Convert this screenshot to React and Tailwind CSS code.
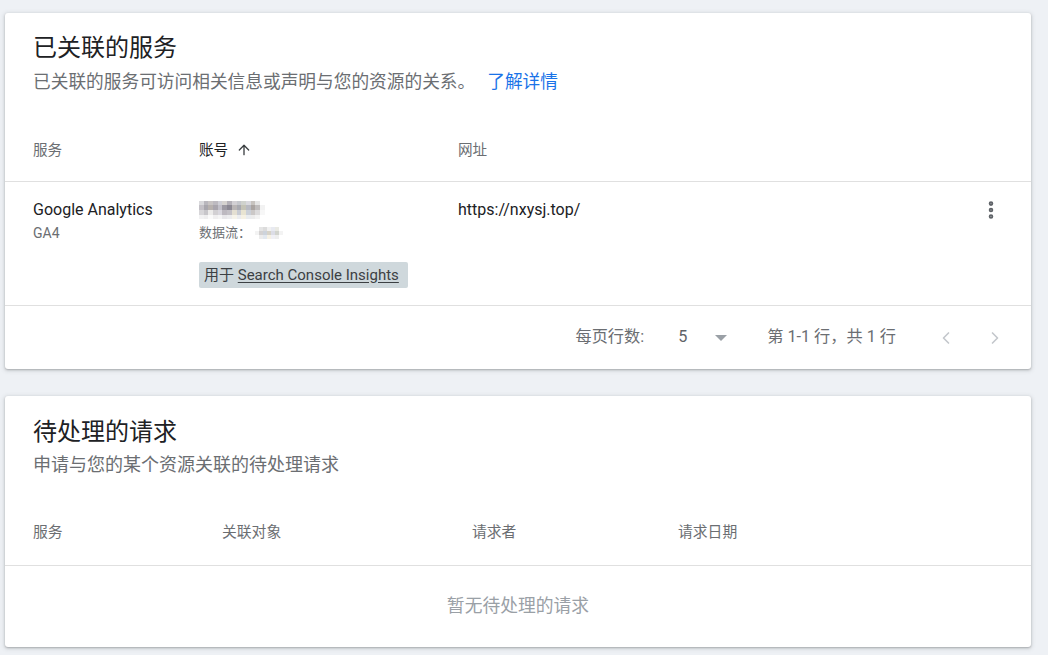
import React from 'react';
import { ArrowUp, ChevronLeft, ChevronRight, EllipsisVertical } from 'lucide-react';

const font = { fontFamily: 'Roboto, "Noto Sans CJK SC", "Noto Sans", sans-serif' };

// pixelated (redacted) text blocks
const Mosaic = ({ cells, size = 4 }) => (
    <div className="flex flex-col">
        {cells.map((row, r) => (
            <div key={r} className="flex">
                {row.map((c, i) => (
                    <span key={i} style={{ width: size, height: size, background: c }} />
                ))}
            </div>
        ))}
    </div>
);

const accountCells = [
    ['#d9d9dc', '#b9b7bd', '#c8c4c4', '#bdbac0', '#cfcfd6', '#d6d3d0', '#b4b1b8', '#d2d0d4', '#c5c7cc', '#cfd2cd', '#d9d9de', '#c7c3bf', '#e4e4e4', '#ffffff'],
    ['#c3c0c6', '#a8a6ad', '#b7b1ae', '#a9a5ad', '#c2c0c9', '#9d9aa3', '#8b8893', '#b9b5b5', '#a8a9b0', '#c4c3b6', '#b8bac2', '#aaa4a1', '#bfbcbc', '#f2f2f2'],
    ['#d7d6d9', '#c7c6ca', '#ecebea', '#d2d0d3', '#dad8df', '#bdb9c0', '#c4c1c7', '#e4dfd2', '#c8cbd3', '#e8e4d2', '#cbd0d8', '#cbc8c7', '#dcdbdc', '#f7f7f7'],
    ['#f2f2f3', '#eeeeef', '#fafafa', '#f0eff0', '#f5f5f5', '#e8e7ea', '#ececee', '#f6f3ea', '#ebecef', '#f5f1e4', '#e9ecef', '#ececec', '#f3f3f3', '#ffffff'],
];

const streamCells = [
    ['#ffffff', '#e5e5e5', '#dcdcdc', '#f1f1f1', '#e8eaf1', '#eaeae4', '#ffffff'],
    ['#f3f3f3', '#d4d2d2', '#cdd3db', '#d7d3c8', '#dcdde6', '#d2d4ce', '#f3f3f3'],
    ['#ffffff', '#ececec', '#e2e8ef', '#f6f1e4', '#f0f0f5', '#eeeeee', '#ffffff'],
];

const Card = ({ children }) => (
    <div className="bg-white rounded-[3px] shadow-[0_1px_2px_rgba(60,64,67,0.3),0_1px_4px_1px_rgba(60,64,67,0.15)]">
        {children}
    </div>
);

export default function App() {
    return (
        <div className="w-[1048px] h-[655px] overflow-hidden bg-[#eef1f5] pl-[5px] pr-[17px] pt-[13px] flex flex-col gap-[27px]" style={font}>
            {/* linked services */}
            <Card>
                <div className="px-[28px] pt-[19px]">
                    <h2 className="text-[24px] leading-[32px] text-[#202124]">已关联的服务</h2>
                    <p className="text-[17.7px] leading-[24px] mt-[6px] text-[#6b6e72]">
                        已关联的服务可访问相关信息或声明与您的资源的关系。
                        <a className="text-[#1a73e8] ml-[12px]">了解详情</a>
                    </p>
                </div>

                <div className="h-[62px] mt-[26px] px-[28px] flex items-center text-[14.6px] text-[#6b6e72] border-b border-[#e0e0e0]">
                    <div className="w-[166px]">服务</div>
                    <div className="w-[259px] flex items-center gap-[8px] text-[#202124]">
                        账号 <ArrowUp size={16} strokeWidth={2} className="text-[#3c4043]" />
                    </div>
                    <div>网址</div>
                </div>

                <div className="px-[28px] pt-[16px] pb-[17px] flex items-start border-b border-[#e0e0e0]">
                    <div className="w-[166px]">
                        <div className="text-[16px] leading-[24px] text-[#202124]">Google Analytics</div>
                        <div className="text-[14px] leading-[22px] text-[#6b6e72]">GA4</div>
                    </div>
                    <div className="w-[259px]">
                        <div className="h-[24px] flex items-center">
                            <Mosaic cells={accountCells} size={4.7} />
                        </div>
                        <div className="h-[22px] flex items-center text-[13px] text-[#6b6e72]">
                            数据流：<span className="ml-[4px]"><Mosaic cells={streamCells} size={4} /></span>
                        </div>
                        <div className="mt-[18px] inline-flex items-center h-[26px] w-[209px] px-[5px] rounded-[2px] bg-[#cfd8dc] text-[15px] text-[#3c4043]">
                            用于&nbsp;<span className="underline underline-offset-2">Search Console Insights</span>
                        </div>
                    </div>
                    <div className="flex-1 text-[16px] leading-[24px] text-[#202124]">https://nxysj.top/</div>
                    <div className="pt-[1px] pr-[1px] text-[#5f6368]">
                        <EllipsisVertical size={22} strokeWidth={3} />
                    </div>
                </div>

                <div className="h-[63px] flex items-center justify-end pr-[26px] text-[16.2px] text-[#6b6e72]">
                    <span>每页行数:</span>
                    <span className="ml-[34px] text-[#5f6368]">5</span>
                    <span className="ml-[28px] w-0 h-0 border-l-[6px] border-r-[6px] border-t-[6px] border-l-transparent border-r-transparent border-t-[#9aa0a6]" />
                    <span className="ml-[40px]">第 1-1 行，共 1 行</span>
                    <ChevronLeft size={20} className="ml-[40px] text-[#c4c7cc]" />
                    <ChevronRight size={20} className="ml-[29px] text-[#c4c7cc]" />
                </div>
            </Card>

            {/* pending requests */}
            <Card>
                <div className="px-[28px] pt-[20px]">
                    <h2 className="text-[24px] leading-[32px] text-[#202124]">待处理的请求</h2>
                    <p className="text-[18px] leading-[24px] mt-[5px] text-[#6b6e72]">申请与您的某个资源关联的待处理请求</p>
                </div>

                <div className="h-[66px] mt-[23px] px-[28px] flex items-center text-[14.8px] text-[#6b6e72] border-b border-[#e0e0e0]">
                    <div className="w-[189px]">服务</div>
                    <div className="w-[250px]">关联对象</div>
                    <div className="w-[206px]">请求者</div>
                    <div>请求日期</div>
                </div>

                <div className="h-[81px] flex items-center justify-center text-[17.8px] text-[#9aa0a6]">
                    暂无待处理的请求
                </div>
            </Card>
        </div>
    );
}
